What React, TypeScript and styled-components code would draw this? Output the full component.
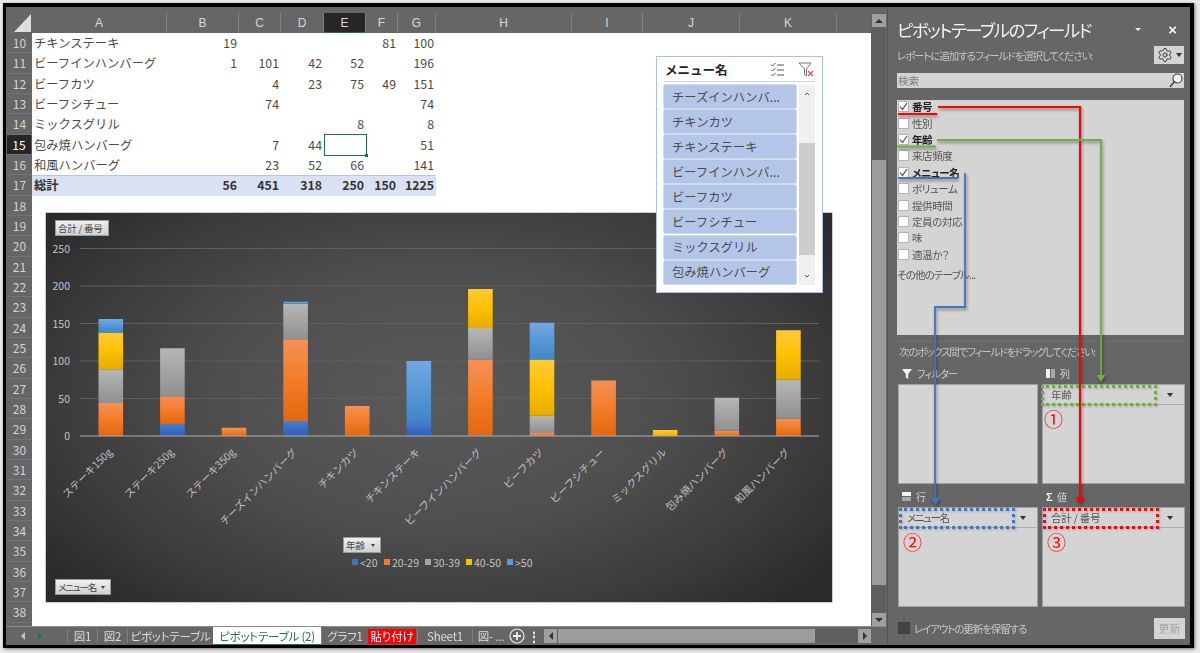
import styled, { createGlobalStyle } from "styled-components";
import { Settings } from "lucide-react";

const COLUMNS = [
  { label: "A", w: 135 },
  { label: "B", w: 72 },
  { label: "C", w: 42 },
  { label: "D", w: 43 },
  { label: "E", w: 42, active: true },
  { label: "F", w: 32 },
  { label: "G", w: 38 },
  { label: "H", w: 136 },
  { label: "I", w: 71 },
  { label: "J", w: 97 },
  { label: "K", w: 97 },
];

const TABLE = [
  ["チキンステーキ", "19", "", "", "", "81", "100"],
  ["ビーフインハンバーグ", "1", "101", "42", "52", "", "196"],
  ["ビーフカツ", "", "4", "23", "75", "49", "151"],
  ["ビーフシチュー", "", "74", "", "", "", "74"],
  ["ミックスグリル", "", "", "", "8", "", "8"],
  ["包み焼ハンバーグ", "", "7", "44", "", "", "51"],
  ["和風ハンバーグ", "", "23", "52", "66", "", "141"],
];
const TOTAL = ["総計", "56", "451", "318", "250", "150", "1225"];

const ROW_NUMBERS = Array.from({ length: 29 }, (_, i) => i + 10);

const SERIES = ["blue", "orange", "gray", "yellow", "sky"];
const LEGEND = [
  { label: "<20", x: 306, color: "#4472c4" },
  { label: "20-29", x: 338, color: "#ed7d31" },
  { label: "30-39", x: 379, color: "#a5a5a5" },
  { label: "40-50", x: 420, color: "#ffc000" },
  { label: ">50", x: 461, color: "#5b9bd5" },
];
const CATEGORIES = [
  { name: "ステーキ150g", v: [0, 44, 45, 49, 18] },
  { name: "ステーキ250g", v: [16, 37, 64, 0, 0] },
  { name: "ステーキ350g", v: [0, 11, 0, 0, 0] },
  { name: "チーズインハンバーグ", v: [20, 109, 47, 0, 3] },
  { name: "チキンカツ", v: [0, 40, 0, 0, 0] },
  { name: "チキンステーキ", v: [19, 0, 0, 0, 81] },
  { name: "ビーフインハンバーグ", v: [1, 101, 42, 52, 0] },
  { name: "ビーフカツ", v: [0, 4, 23, 75, 49] },
  { name: "ビーフシチュー", v: [0, 74, 0, 0, 0] },
  { name: "ミックスグリル", v: [0, 0, 0, 8, 0] },
  { name: "包み焼ハンバーグ", v: [0, 7, 44, 0, 0] },
  { name: "和風ハンバーグ", v: [0, 23, 52, 66, 0] },
];

const SLICER_ITEMS = [
  "チーズインハンバ...",
  "チキンカツ",
  "チキンステーキ",
  "ビーフインハンバ...",
  "ビーフカツ",
  "ビーフシチュー",
  "ミックスグリル",
  "包み焼ハンバーグ",
];

const FIELDS = [
  { name: "番号", on: true },
  { name: "性別" },
  { name: "年齢", on: true },
  { name: "来店頻度" },
  { name: "メニュー名", on: true },
  { name: "ボリューム" },
  { name: "提供時間" },
  { name: "定員の対応" },
  { name: "味" },
  { name: "適温か？" },
];

const TABS = [
  { label: "図1", w: 30 },
  { label: "図2", w: 30 },
  { label: "ピボットテーブル", w: 86 },
  { label: "ピボットテーブル (2)", w: 108, active: true },
  { label: "グラフ1", w: 47 },
  { label: "貼り付け", w: 48, red: true },
  { label: "Sheet1", w: 55 },
  { label: "図- ...", w: 37 },
];

function Chart() {
  const y = (v: number) => 223 - v * 0.75;
  return (
    <ChartBox>
      <ChartSvg width="786" height="389" viewBox="0 0 786 389">
        <defs>
          <linearGradient id="blue" x1="0" y1="0" x2="0" y2="1">
            <stop offset="0" stopColor="#4a7ccf" />
            <stop offset="1" stopColor="#2f5eb5" />
          </linearGradient>
          <linearGradient id="orange" x1="0" y1="0" x2="0" y2="1">
            <stop offset="0" stopColor="#f49158" />
            <stop offset="0.5" stopColor="#f47c28" />
            <stop offset="1" stopColor="#e2670f" />
          </linearGradient>
          <linearGradient id="gray" x1="0" y1="0" x2="0" y2="1">
            <stop offset="0" stopColor="#b6b6b6" />
            <stop offset="1" stopColor="#909090" />
          </linearGradient>
          <linearGradient id="yellow" x1="0" y1="0" x2="0" y2="1">
            <stop offset="0" stopColor="#ffca38" />
            <stop offset="0.5" stopColor="#ffc000" />
            <stop offset="1" stopColor="#e5ad00" />
          </linearGradient>
          <linearGradient id="sky" x1="0" y1="0" x2="0" y2="1">
            <stop offset="0" stopColor="#70a8e2" />
            <stop offset="1" stopColor="#3f87c8" />
          </linearGradient>
        </defs>
        {[50, 100, 150, 200, 250].map((v) => (
          <line key={v} x1="34" x2="773" y1={y(v)} y2={y(v)} stroke="#5f5f5f" strokeWidth="1" />
        ))}
        {[0, 50, 100, 150, 200, 250].map((v) => (
          <AxisText key={v} x="24" y={y(v) + 4} textAnchor="end">
            {v}
          </AxisText>
        ))}
        {CATEGORIES.map((c, i) => {
          const cx = 64.8 + 61.6 * i;
          let base = 0;
          return (
            <g key={c.name}>
              {c.v.map((v, s) => {
                if (!v) return null;
                const top = base + v;
                const rect = (
                  <rect
                    key={s}
                    x={cx - 12.3}
                    y={y(top)}
                    width="24.6"
                    height={v * 0.75}
                    fill={`url(#${SERIES[s]})`}
                  />
                );
                base = top;
                return rect;
              })}
              <CategoryText transform={`translate(${cx + 2} 240) rotate(-45)`} textAnchor="end">
                {c.name}
              </CategoryText>
            </g>
          );
        })}
        <line x1="34" x2="773" y1="223" y2="223" stroke="#b0b0b0" strokeWidth="1.2" />
        {LEGEND.map((l) => (
          <g key={l.label}>
            <rect x={l.x} y="346" width="6" height="6" fill={l.color} />
            <AxisText x={l.x + 8} y="353.5">
              {l.label}
            </AxisText>
          </g>
        ))}
      </ChartSvg>
      <FieldButton $left={9} $top={7} $w={54}>
        合計 / 番号
      </FieldButton>
      <FieldButton $left={297} $top={324} $w={38} $drop>
        年齢
      </FieldButton>
      <FieldButton $left={9} $top={366} $w={56} $drop $tight>
        メニュー名
      </FieldButton>
    </ChartBox>
  );
}

function Slicer() {
  return (
    <SlicerBox>
      <SlicerHead>
        <SlicerTitle>メニュー名</SlicerTitle>
        <svg width="15" height="15" viewBox="0 0 15 15" fill="none" stroke="#555" strokeWidth="1">
          <path d="M1 2.5l1.5 1.5 3-3M1 7.5L2.5 9l3-3M1 12.5L2.5 14l3-3" />
          <path d="M7 3h7M7 8h7M7 13h7" />
        </svg>
        <svg width="16" height="15" viewBox="0 0 16 15" fill="none">
          <path d="M1 1h12L8.5 7v7l-2-1.500V7z" stroke="#777" strokeWidth="1" />
          <path d="M10 9l5 5M15 9l-5 5" stroke="#e0504a" strokeWidth="1.200" />
        </svg>
      </SlicerHead>
      <SlicerBody>
        <SlicerList>
          {SLICER_ITEMS.map((item) => (
            <SlicerItem key={item}>{item}</SlicerItem>
          ))}
        </SlicerList>
        <SlicerScroll>
          <svg width="16" height="10" viewBox="0 0 16 10" fill="none" stroke="#555" strokeWidth="1">
            <path d="M6 6l2-2 2 2" />
          </svg>
          <SlicerThumb />
          <svg width="16" height="10" viewBox="0 0 16 10" fill="none" stroke="#555" strokeWidth="1">
            <path d="M6 4l2 2 2-2" />
          </svg>
        </SlicerScroll>
      </SlicerBody>
    </SlicerBox>
  );
}

function Sheet() {
  return (
    <SheetPane>
      <ColumnHeaders>
        <CornerCell>
          <Corner />
        </CornerCell>
        {COLUMNS.map((c) => (
          <ColumnHeader key={c.label} $w={c.w} $active={c.active}>
            {c.label}
          </ColumnHeader>
        ))}
      </ColumnHeaders>
      <SheetBody>
        <RowHeaders>
          {ROW_NUMBERS.map((n) => (
            <RowHeader key={n} $active={n === 15}>
              {n}
            </RowHeader>
          ))}
        </RowHeaders>
        <Cells>
          {TABLE.map((row) => (
            <DataRow key={row[0]}>
              {row.map((cell, i) => (
                <Cell key={i} $first={i === 0}>
                  {cell}
                </Cell>
              ))}
            </DataRow>
          ))}
          <TotalRow>
            {TOTAL.map((cell, i) => (
              <Cell key={i} $first={i === 0}>
                {cell}
              </Cell>
            ))}
          </TotalRow>
          <Selection />
          <Chart />
          <Slicer />
        </Cells>
      </SheetBody>
    </SheetPane>
  );
}

function TabBar() {
  return (
    <Tabs>
      <NavArrows>
        <TriLeft $color="#c4c4c4" />
        <TriRight $color="#217346" />
      </NavArrows>
      {TABS.map((t) => (
        <Tab key={t.label} $w={t.w} $active={t.active} $red={t.red}>
          {t.label}
        </Tab>
      ))}
      <AddSheet>
        <svg width="16" height="16" viewBox="0 0 16 16" fill="none" stroke="#eee">
          <circle cx="8" cy="8" r="7" strokeWidth="1.200" />
          <path d="M8 4v8M4 8h8" strokeWidth="1.800" />
        </svg>
      </AddSheet>
      <Dots>⋮</Dots>
      <HScroll>
        <ScrollBtn>
          <TriLeft $color="#333" />
        </ScrollBtn>
        <HThumb />
        <ScrollBtn>
          <TriRight $color="#333" />
        </ScrollBtn>
      </HScroll>
    </Tabs>
  );
}

function FieldPanel() {
  return (
    <Panel>
      <PanelHead>
        <PanelTitle>ピボットテーブルのフィールド</PanelTitle>
        <HeadCaret />
        <CloseMark>×</CloseMark>
      </PanelHead>
      <SubRow>
        <SubLabel>レポートに追加するフィールドを選択してください:</SubLabel>
        <GearButton>
          <Settings size={16} strokeWidth={1.4} color="#333" />
          <Caret />
        </GearButton>
      </SubRow>
      <SearchBox>
        <SearchHint>検索</SearchHint>
        <svg width="14" height="15" viewBox="0 0 14 15" fill="none" stroke="#333" strokeWidth="1.100">
          <circle cx="8.500" cy="5.500" r="4.500" fill="#f4f4f4" />
          <path d="M5 9l-4 5" strokeWidth="1.300" />
        </svg>
      </SearchBox>
      <FieldList>
        {FIELDS.map((f) => (
          <FieldRow key={f.name}>
            <CheckBox>
              {f.on && (
                <svg width="9" height="9" viewBox="0 0 9 9" fill="none" stroke="#444" strokeWidth="1.100">
                  <path d="M1 4.500L3.500 7.500 8 1" />
                </svg>
              )}
            </CheckBox>
            <FieldName $on={f.on}>{f.name}</FieldName>
          </FieldRow>
        ))}
        <MoreTables>その他のテーブル...</MoreTables>
      </FieldList>
      <DragHint>次のボックス間でフィールドをドラッグしてください:</DragHint>
      <Areas>
        <Area>
          <AreaLabel>
            <svg width="10" height="10" viewBox="0 0 10 10" fill="#f2f2f2">
              <path d="M0 0h10L6.200 5v5L3.800 8.500V5z" />
            </svg>
            フィルター
          </AreaLabel>
          <AreaBox />
        </Area>
        <Area>
          <AreaLabel>
            <svg width="9" height="9" viewBox="0 0 9 9">
              <rect width="4" height="9" fill="#f2f2f2" />
              <rect x="5" width="4" height="9" fill="#a8a8a8" />
            </svg>
            列
          </AreaLabel>
          <AreaBox>
            <FieldChip>
              年齢
              <Caret />
              <ChipMark $color="#70ad47" $left={-2} />
            </FieldChip>
            <Badge $left={1}>①</Badge>
          </AreaBox>
        </Area>
        <Area>
          <AreaLabel>
            <svg width="9" height="9" viewBox="0 0 9 9">
              <rect width="9" height="4" fill="#f2f2f2" />
              <rect y="5" width="9" height="4" fill="#a8a8a8" />
            </svg>
            行
          </AreaLabel>
          <AreaBox>
            <FieldChip $tight>
              メニュー名
              <Caret />
              <ChipMark $color="#4472c4" $left={0} />
            </FieldChip>
            <Badge $left={4}>②</Badge>
          </AreaBox>
        </Area>
        <Area>
          <AreaLabel>
            <Sigma>Σ</Sigma>
            値
          </AreaLabel>
          <AreaBox>
            <FieldChip>
              合計 / 番号
              <Caret />
              <ChipMark $color="#ff0000" $left={0} />
            </FieldChip>
            <Badge $left={4}>③</Badge>
          </AreaBox>
        </Area>
      </Areas>
      <PanelFoot>
        <DeferBox />
        <DeferLabel>レイアウトの更新を保留する</DeferLabel>
        <UpdateButton>更新</UpdateButton>
      </PanelFoot>
    </Panel>
  );
}

export default function App() {
  return (
    <Page>
      <GlobalStyle />
      <ExcelWindow>
        <Workbook>
          <WorkRow>
            <Sheet />
            <VScroll>
              <ScrollBtn $tall>
                <TriUp />
              </ScrollBtn>
              <VThumb />
              <ScrollBtn $tall>
                <TriDown />
              </ScrollBtn>
            </VScroll>
          </WorkRow>
          <TabBar />
        </Workbook>
        <FieldPanel />
      </ExcelWindow>
      {/* 手書きの矢印 */}
      <Arrows width="1200" height="653" viewBox="0 0 1200 653" fill="none">
        <path d="M898 114h39" stroke="#ff0000" strokeWidth="2" />
        <path d="M897 146.500h39" stroke="#70ad47" strokeWidth="1.800" />
        <path d="M898 178h60" stroke="#4472c4" strokeWidth="2.200" />
        <path d="M938 107h142v391" stroke="#ff0000" strokeWidth="2" />
        <path d="M1075.500 497h9l-4.500 7z" fill="#ff0000" />
        <path d="M937 140h164v236" stroke="#70ad47" strokeWidth="1.800" />
        <path d="M1096.500 375h9l-4.500 7z" fill="#70ad47" />
        <path d="M965 173v134h-30v192" stroke="#4472c4" strokeWidth="1.800" />
        <path d="M931 498h9l-4.500 7z" fill="#4472c4" />
      </Arrows>
    </Page>
  );
}

const GlobalStyle = createGlobalStyle`
  html, body {
    margin: 0;
    padding: 0;
    background: #e9e9e9;
  }
  body {
    font-family: "Noto Sans CJK JP", "Noto Sans", sans-serif;
  }
`;

const Page = styled.div`
  position: relative;
  width: 1200px;
  height: 653px;
  overflow: hidden;
  padding: 3px 6px 5px 3px;
  box-sizing: border-box;
  filter: blur(0.35px);
`;

const ExcelWindow = styled.div`
  display: flex;
  height: 100%;
  box-sizing: border-box;
  border: solid #000;
  border-width: 4px 4px 3px 3px;
  background: #666;
  box-shadow: 1px 1px 3px rgba(0, 0, 0, 0.5);
`;

const Workbook = styled.div`
  width: 880px;
  flex: none;
  display: flex;
  flex-direction: column;
  padding-top: 6px;
  box-sizing: border-box;
`;

const WorkRow = styled.div`
  display: flex;
  flex: 1;
  min-height: 0;
`;

const SheetPane = styled.div`
  width: 865px;
  display: flex;
  flex-direction: column;
`;

const ColumnHeaders = styled.div`
  display: flex;
  height: 20px;
  flex: none;
`;

const CornerCell = styled.div`
  width: 26px;
  flex: none;
  display: flex;
  align-items: flex-end;
  justify-content: flex-end;
`;

const Corner = styled.div`
  width: 0;
  height: 0;
  margin: 0 1px 1px 0;
  border-left: 17px solid transparent;
  border-bottom: 18px solid #dedede;
`;

const ColumnHeader = styled.div<{ $w: number; $active?: boolean }>`
  width: ${({ $w }) => $w}px;
  box-sizing: border-box;
  flex: none;
  display: flex;
  align-items: center;
  justify-content: center;
  font-family: "Liberation Sans", sans-serif;
  font-size: 12px;
  color: #d8d8d8;
  border-right: 1px solid #808080;
  background: ${({ $active }) => ($active ? "#262626" : "#666")};
  border-bottom: 1px solid ${({ $active }) => ($active ? "#217346" : "#666")};
`;

const SheetBody = styled.div`
  flex: 1;
  min-height: 0;
  display: flex;
  overflow: hidden;
`;

const RowHeaders = styled.div`
  width: 26px;
  flex: none;
  display: flex;
  flex-direction: column;
  padding-left: 1px;
  box-sizing: border-box;
`;

const RowHeader = styled.div<{ $active?: boolean }>`
  height: 20.33px;
  flex: none;
  box-sizing: border-box;
  display: flex;
  align-items: center;
  justify-content: center;
  font-size: 12px;
  color: ${({ $active }) => ($active ? "#fff" : "#d4d4d4")};
  background: ${({ $active }) => ($active ? "#262626" : "#666")};
  border-bottom: 1px solid #747474;
  border-right: ${({ $active }) => ($active ? "1px solid #217346" : "none")};
`;

const Cells = styled.div`
  position: relative;
  flex: 1;
  background: #fff;
`;

const DataRow = styled.div`
  display: grid;
  grid-template-columns: 135px 72px 42px 43px 42px 32px 38px;
  height: 20.33px;
  width: 404px;
  align-items: center;
  font-size: 12.300px;
  color: #4a4a4a;
`;

const TotalRow = styled(DataRow)`
  background: #d9e1f2;
  box-shadow: inset 0 1px 0 #b4c6e7;
  font-weight: 700;
  color: #333;
`;

const Cell = styled.span<{ $first?: boolean }>`
  text-align: ${({ $first }) => ($first ? "left" : "right")};
  padding: ${({ $first }) => ($first ? "0 0 0 2px" : "0 2px 0 0")};
  white-space: nowrap;
`;

const Selection = styled.div`
  position: absolute;
  left: 292px;
  top: 101px;
  width: 43px;
  height: 22px;
  box-sizing: border-box;
  border: 1.500px solid #217346;

  &::after {
    content: "";
    position: absolute;
    right: -2px;
    bottom: -2px;
    width: 3px;
    height: 3px;
    background: #217346;
  }
`;

const ChartBox = styled.div`
  position: absolute;
  left: 14px;
  top: 180px;
  width: 786px;
  height: 389px;
  background: radial-gradient(ellipse 62% 72% at 50% 48%, #5a5a5a 0%, #4f4f4f 45%, #3a3a3a 80%, #2b2b2b 100%);
  box-shadow: 0 0 0 0.5px #999;
`;

const ChartSvg = styled.svg`
  display: block;
`;

const AxisText = styled.text`
  font-size: 10.500px;
  fill: #c4c4c4;
`;

const CategoryText = styled.text`
  font-size: 10.400px;
  fill: #c0c0c0;
`;

const FieldButton = styled.div<{ $left: number; $top: number; $w: number; $drop?: boolean; $tight?: boolean }>`
  position: absolute;
  left: ${({ $left }) => $left}px;
  top: ${({ $top }) => $top}px;
  width: ${({ $w }) => $w}px;
  height: 16px;
  padding-left: 2px;
  display: flex;
  align-items: center;
  font-size: 9.500px;
  letter-spacing: ${({ $tight }) => ($tight ? "-1.200px" : "-0.200px")};
  color: #444;
  white-space: nowrap;
  background: linear-gradient(#f0f0f0, #cfcfcf);
  border: 1px solid #9a9a9a;
  box-sizing: border-box;
  font-feature-settings: "palt";

  &::after {
    content: ${({ $drop }) => ($drop ? '""' : "none")};
    position: absolute;
    right: 5px;
    top: 6px;
    border: 2.500px solid transparent;
    border-top: 3px solid #444;
  }
`;

const SlicerBox = styled.div`
  position: absolute;
  left: 624px;
  top: 23px;
  width: 167px;
  height: 237px;
  box-sizing: border-box;
  background: #fff;
  border: 1px solid #a9c0e8;
  padding: 0 7px 7px 7px;
  display: flex;
  flex-direction: column;
`;

const SlicerHead = styled.div`
  height: 24px;
  flex: none;
  display: flex;
  align-items: center;
  gap: 13px;
  border-bottom: 1.500px solid #c5d4ee;
  padding: 0 1px 0 1px;
  margin-bottom: 3px;
`;

const SlicerTitle = styled.span`
  flex: 1;
  font-size: 12.500px;
  font-weight: 700;
  color: #222;
`;

const SlicerBody = styled.div`
  flex: 1;
  min-height: 0;
  display: flex;
  gap: 3px;
`;

const SlicerList = styled.div`
  flex: 1;
  display: flex;
  flex-direction: column;
  gap: 2.100px;
`;

const SlicerItem = styled.div`
  height: 23px;
  flex: none;
  display: flex;
  align-items: center;
  padding-left: 8px;
  background: #b4c6e7;
  border-radius: 1px;
  box-shadow: 0 0 0 0.5px #a6b8da;
  font-size: 12.300px;
  color: #4a4a4a;
  white-space: nowrap;
`;

const SlicerScroll = styled.div`
  width: 16px;
  flex: none;
  background: #f0f0f0;
  display: flex;
  flex-direction: column;
  justify-content: space-between;
  position: relative;
  padding: 4px 0;
  box-sizing: border-box;
`;

const SlicerThumb = styled.div`
  position: absolute;
  left: 0;
  right: 0;
  top: 58px;
  height: 112px;
  background: #cdcdcd;
`;

const VScroll = styled.div`
  width: 15px;
  flex: none;
  padding: 1px 0 0 1px;
  display: flex;
  flex-direction: column;
  align-items: stretch;
  background: #5e5e5e;
  box-sizing: border-box;
  margin-top: 0;
`;

const ScrollBtn = styled.div<{ $tall?: boolean }>`
  width: ${({ $tall }) => ($tall ? "100%" : "13px")};
  height: ${({ $tall }) => ($tall ? "13px" : "14px")};
  flex: none;
  display: flex;
  align-items: center;
  justify-content: center;
  background: #a0a0a0;
`;

const VThumb = styled.div`
  margin: 133px 0 28px;
  flex: 1;
  background: #9c9c9c;
`;

const TriUp = styled.span`
  border: 4px solid transparent;
  border-top: none;
  border-bottom: 4px solid #333;
`;

const TriDown = styled.span`
  border: 4px solid transparent;
  border-bottom: none;
  border-top: 4px solid #333;
`;

const TriLeft = styled.span<{ $color: string }>`
  border: 4px solid transparent;
  border-left: none;
  border-right: 4px solid ${({ $color }) => $color};
`;

const TriRight = styled.span<{ $color: string }>`
  border: 4px solid transparent;
  border-right: none;
  border-left: 4px solid ${({ $color }) => $color};
`;

const Tabs = styled.div`
  height: 19px;
  flex: none;
  display: flex;
  align-items: center;
  font-size: 11.500px;
  letter-spacing: -0.2px;
  font-feature-settings: "palt";
  border-top: 1px solid #8c8c8c;
  box-sizing: border-box;
`;

const NavArrows = styled.div`
  width: 61px;
  flex: none;
  display: flex;
  align-items: center;
  gap: 13px;
  padding-left: 15px;
  box-sizing: border-box;
`;

const Tab = styled.div<{ $w: number; $active?: boolean; $red?: boolean }>`
  width: ${({ $w }) => $w}px;
  flex: none;
  height: ${({ $active, $red }) => ($active ? "18px" : $red ? "15px" : "14px")};
  margin-right: ${({ $red }) => ($red ? "1px" : "0")};
  display: flex;
  align-items: center;
  justify-content: center;
  white-space: nowrap;
  box-sizing: border-box;
  color: ${({ $active, $red }) => ($active ? "#217346" : $red ? "#fff" : "#dcdcdc")};
  background: ${({ $active, $red }) => ($active ? "#fff" : $red ? "#ff0000" : "transparent")};
  border-bottom: ${({ $active }) => ($active ? "1.500px solid #217346" : "none")};
  border-left: ${({ $active, $red }) => ($active || $red ? "none" : "1px solid #808080")};
`;

const AddSheet = styled.div`
  width: 16px;
  flex: none;
  display: flex;
  justify-content: center;
`;

const Dots = styled.span`
  width: 18px;
  flex: none;
  text-align: center;
  font-size: 14px;
  font-weight: 700;
  color: #e6e6e6;
`;

const HScroll = styled.div`
  width: 327px;
  flex: none;
  height: 14px;
  margin-left: 1px;
  display: flex;
  background: #5e5e5e;
`;

const HThumb = styled.div`
  width: 257px;
  margin: 0 auto 0 1px;
  background: #9c9c9c;
`;

const Panel = styled.div`
  flex: 1;
  min-width: 0;
  display: flex;
  flex-direction: column;
  padding: 0 6px 0 9px;
  box-sizing: border-box;
  border-left: 1px solid #575757;
  margin-left: 1px;
  font-feature-settings: "palt";
`;

const PanelHead = styled.div`
  height: 39px;
  flex: none;
  display: flex;
  align-items: center;
  padding-top: 5px;
  box-sizing: border-box;
`;

const PanelTitle = styled.div`
  flex: 1;
  font-size: 17.500px;
  letter-spacing: -1.600px;
  color: #f2f2f2;
  white-space: nowrap;
`;

const HeadCaret = styled.span`
  border: 3px solid transparent;
  border-bottom: none;
  border-top: 3px solid #ededed;
  margin-right: 27px;
`;

const CloseMark = styled.span`
  font-family: "Liberation Sans", sans-serif;
  font-size: 15px;
  font-weight: 700;
  color: #f2f2f2;
  margin-right: 7px;
`;

const SubRow = styled.div`
  height: 18px;
  flex: none;
  display: flex;
  align-items: center;
  justify-content: space-between;
`;

const SubLabel = styled.span`
  font-size: 10.500px;
  letter-spacing: -1.100px;
  color: #c4c4c4;
  white-space: nowrap;
`;

const GearButton = styled.div`
  width: 30px;
  height: 18px;
  display: flex;
  align-items: center;
  justify-content: center;
  gap: 3px;
  background: #d4d4d4;
`;

const Caret = styled.span`
  border: 3.500px solid transparent;
  border-bottom: none;
  border-top: 4px solid #333;
`;

const SearchBox = styled.div`
  height: 15px;
  flex: none;
  margin-top: 9px;
  padding: 0 1px 0 1px;
  display: flex;
  align-items: center;
  justify-content: space-between;
  background: #d4d4d4;
`;

const SearchHint = styled.span`
  font-size: 10.500px;
  color: #808080;
`;

const FieldList = styled.div`
  height: 235px;
  flex: none;
  margin-top: 12px;
  background: #d4d4d4;
  display: flex;
  flex-direction: column;
`;

const FieldRow = styled.div`
  height: 16.400px;
  flex: none;
  display: flex;
  align-items: center;
  gap: 3px;
  padding-left: 1px;

  &:first-child {
    margin-top: -1.500px;
  }
`;

const CheckBox = styled.div`
  width: 11px;
  height: 11px;
  flex: none;
  box-sizing: border-box;
  display: flex;
  align-items: center;
  justify-content: center;
  background: #fff;
  border: 1px solid #b4b4b4;
`;

const FieldName = styled.span<{ $on?: boolean }>`
  font-size: 10.500px;
  letter-spacing: -0.400px;
  font-weight: ${({ $on }) => ($on ? 700 : 400)};
  color: ${({ $on }) => ($on ? "#222" : "#555")};
`;

const MoreTables = styled.div`
  margin-top: 5px;
  font-size: 10.500px;
  letter-spacing: -0.800px;
  color: #555;
`;

const DragHint = styled.div`
  height: 19px;
  flex: none;
  margin-top: 6px;
  border-top: 1px solid #707070;
  display: flex;
  align-items: center;
  font-size: 10.500px;
  letter-spacing: -1.200px;
  color: #c4c4c4;
  padding-left: 2px;
  white-space: nowrap;
`;

const Areas = styled.div`
  display: grid;
  grid-template-columns: 140px 143px;
  column-gap: 4px;
  margin-left: 1px;
`;

const Area = styled.div`
  display: flex;
  flex-direction: column;
`;

const AreaLabel = styled.div`
  height: 23px;
  display: flex;
  align-items: center;
  gap: 5px;
  padding: 2px 0 0 4px;
  box-sizing: border-box;
  font-size: 10px;
  letter-spacing: -0.700px;
  color: #d0d0d0;
`;

const Sigma = styled.span`
  font-family: "Liberation Sans", sans-serif;
  font-size: 11px;
  font-weight: 700;
  color: #f2f2f2;
`;

const AreaBox = styled.div`
  height: 100px;
  box-sizing: border-box;
  background: #d4d4d4;
  border: 1px solid #a0a0a0;
`;

const FieldChip = styled.div<{ $tight?: boolean }>`
  position: relative;
  height: 20px;
  display: flex;
  align-items: center;
  justify-content: space-between;
  padding: 0 11px 0 8px;
  box-sizing: border-box;
  font-size: 10.500px;
  letter-spacing: ${({ $tight }) => ($tight ? "-1.400px" : "-0.200px")};
  color: #555;
  border-bottom: 1px solid #ababab;
`;

const ChipMark = styled.span<{ $color: string; $left: number }>`
  position: absolute;
  left: ${({ $left }) => $left}px;
  top: 0;
  width: 116px;
  height: 21px;
  box-sizing: border-box;
  border: 3px dotted ${({ $color }) => $color};
  filter: drop-shadow(1px 1px 1px rgba(0, 0, 0, 0.25));
`;

const Badge = styled.div<{ $left: number }>`
  margin: 3px 0 0 ${({ $left }) => $left}px;
  font-size: 19px;
  line-height: 22px;
  color: #ff0000;
`;

const PanelFoot = styled.div`
  flex: 1;
  display: flex;
  align-items: center;
  margin-left: 1px;
  margin-right: -1px;
  gap: 4px;
  padding-top: 4px;
  box-sizing: border-box;
`;

const DeferBox = styled.div`
  width: 12px;
  height: 12px;
  background: #444;
`;

const DeferLabel = styled.span`
  flex: 1;
  font-size: 10.500px;
  letter-spacing: -1.100px;
  color: #c8c8c8;
`;

const UpdateButton = styled.div`
  width: 31px;
  height: 21px;
  display: flex;
  align-items: center;
  justify-content: center;
  background: #d4d4d4;
  font-size: 11px;
  color: #a6a6a6;
`;

const Arrows = styled.svg`
  position: absolute;
  left: 0;
  top: 0;
  pointer-events: none;
  filter: drop-shadow(1px 2px 1.500px rgba(0, 0, 0, 0.4));
`;
